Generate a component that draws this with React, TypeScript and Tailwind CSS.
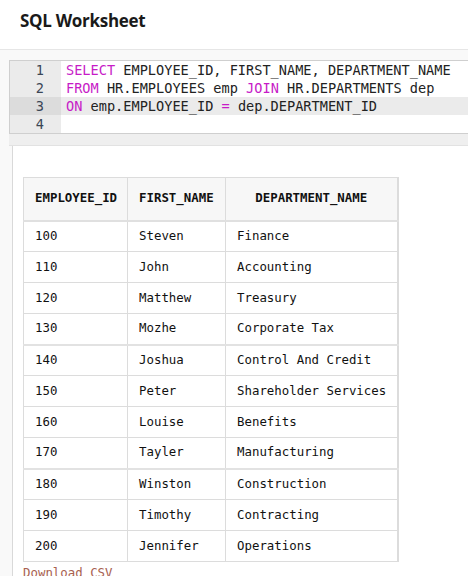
import React from "react";

const rows: [string, string, string][] = [
  ["100", "Steven", "Finance"],
  ["110", "John", "Accounting"],
  ["120", "Matthew", "Treasury"],
  ["130", "Mozhe", "Corporate Tax"],
  ["140", "Joshua", "Control And Credit"],
  ["150", "Peter", "Shareholder Services"],
  ["160", "Louise", "Benefits"],
  ["170", "Tayler", "Manufacturing"],
  ["180", "Winston", "Construction"],
  ["190", "Timothy", "Contracting"],
  ["200", "Jennifer", "Operations"],
];

const K = ({ children }: { children: React.ReactNode }) => (
  <span className="text-[#c71bc7]">{children}</span>
);

export default function App() {
  const lines: React.ReactNode[] = [
    <>
      <K>SELECT</K> EMPLOYEE_ID, FIRST_NAME, DEPARTMENT_NAME
    </>,
    <>
      <K>FROM</K> HR.EMPLOYEES emp <K>JOIN</K> HR.DEPARTMENTS dep
    </>,
    <>
      <K>ON</K> emp.EMPLOYEE_ID <K>=</K> dep.DEPARTMENT_ID
    </>,
    <></>,
  ];
  return (
    <div className="w-[468px] h-[576px] overflow-hidden bg-[#f9f9f9]">
      <div className="h-[50px] bg-white border-b border-[#e6e6e6] flex items-center pl-[20px] pb-[8px]">
        <span className="font-['Open_Sans',sans-serif] font-bold text-[17px] text-[#1a1a1a] tracking-[-0.3px]">
          SQL Worksheet
        </span>
      </div>
      <div className="pl-[9px] pt-[10px]">
        <div className="border border-r-0 border-[#cfcfcf] bg-white font-['DejaVu_Sans_Mono',monospace] text-[13.6px] text-[#222]">
          {lines.map((l, i) => (
            <div key={i} className={`flex h-[18px] leading-[18px] ${i === 2 ? "bg-[#ebebeb]" : ""}`}>
              <div
                className={`w-[51px] shrink-0 text-right pr-[17px] text-[#3b4656] ${
                  i === 2 ? "bg-[#dcdcdc]" : "bg-[#ebebeb]"
                }`}
              >
                {i + 1}
              </div>
              <div className="pl-[5px] whitespace-pre">{l}</div>
            </div>
          ))}
        </div>
        <div className="h-[12px] bg-[#efefef] border-b border-[#e2e2e2]" />
        <div className="ml-[3px] border-l border-[#d9d9d9] bg-white pt-[31px] pl-[10px] h-[460px]">
          <table className="border-collapse font-['DejaVu_Sans_Mono',monospace] text-[12.4px] text-[#111]">
            <thead>
              <tr className="h-[43px] bg-[#f7f7f7]">
                <th className="w-[104px] border border-[#dcdcdc] border-b-2 border-b-[#e0e0e0] text-left pl-[11px] font-bold">
                  EMPLOYEE_ID
                </th>
                <th className="w-[98px] border border-[#dcdcdc] border-b-2 border-b-[#e0e0e0] text-left pl-[11px] font-bold">
                  FIRST_NAME
                </th>
                <th className="w-[172px] border border-[#dcdcdc] border-b-2 border-b-[#e0e0e0] border-r-2 text-center font-bold">
                  DEPARTMENT_NAME
                </th>
              </tr>
            </thead>
            <tbody>
              {rows.map((r, i) => {
                const thick = i === 3 || i === 7;
                const bb = thick ? "border-b-2 border-b-[#e2e2e2]" : "";
                return (
                  <tr key={i} className="h-[31px]">
                    <td className={`border border-[#dcdcdc] pl-[11px] ${bb}`}>{r[0]}</td>
                    <td className={`border border-[#dcdcdc] pl-[11px] ${bb}`}>{r[1]}</td>
                    <td className={`border border-[#dcdcdc] border-r-2 pl-[11px] ${bb}`}>{r[2]}</td>
                  </tr>
                );
              })}
            </tbody>
          </table>
          <div className="font-['DejaVu_Sans_Mono',monospace] text-[12.4px] text-[#a8614f] mt-[3px] leading-[16px]">
            Download CSV
          </div>
        </div>
      </div>
    </div>
  );
}
